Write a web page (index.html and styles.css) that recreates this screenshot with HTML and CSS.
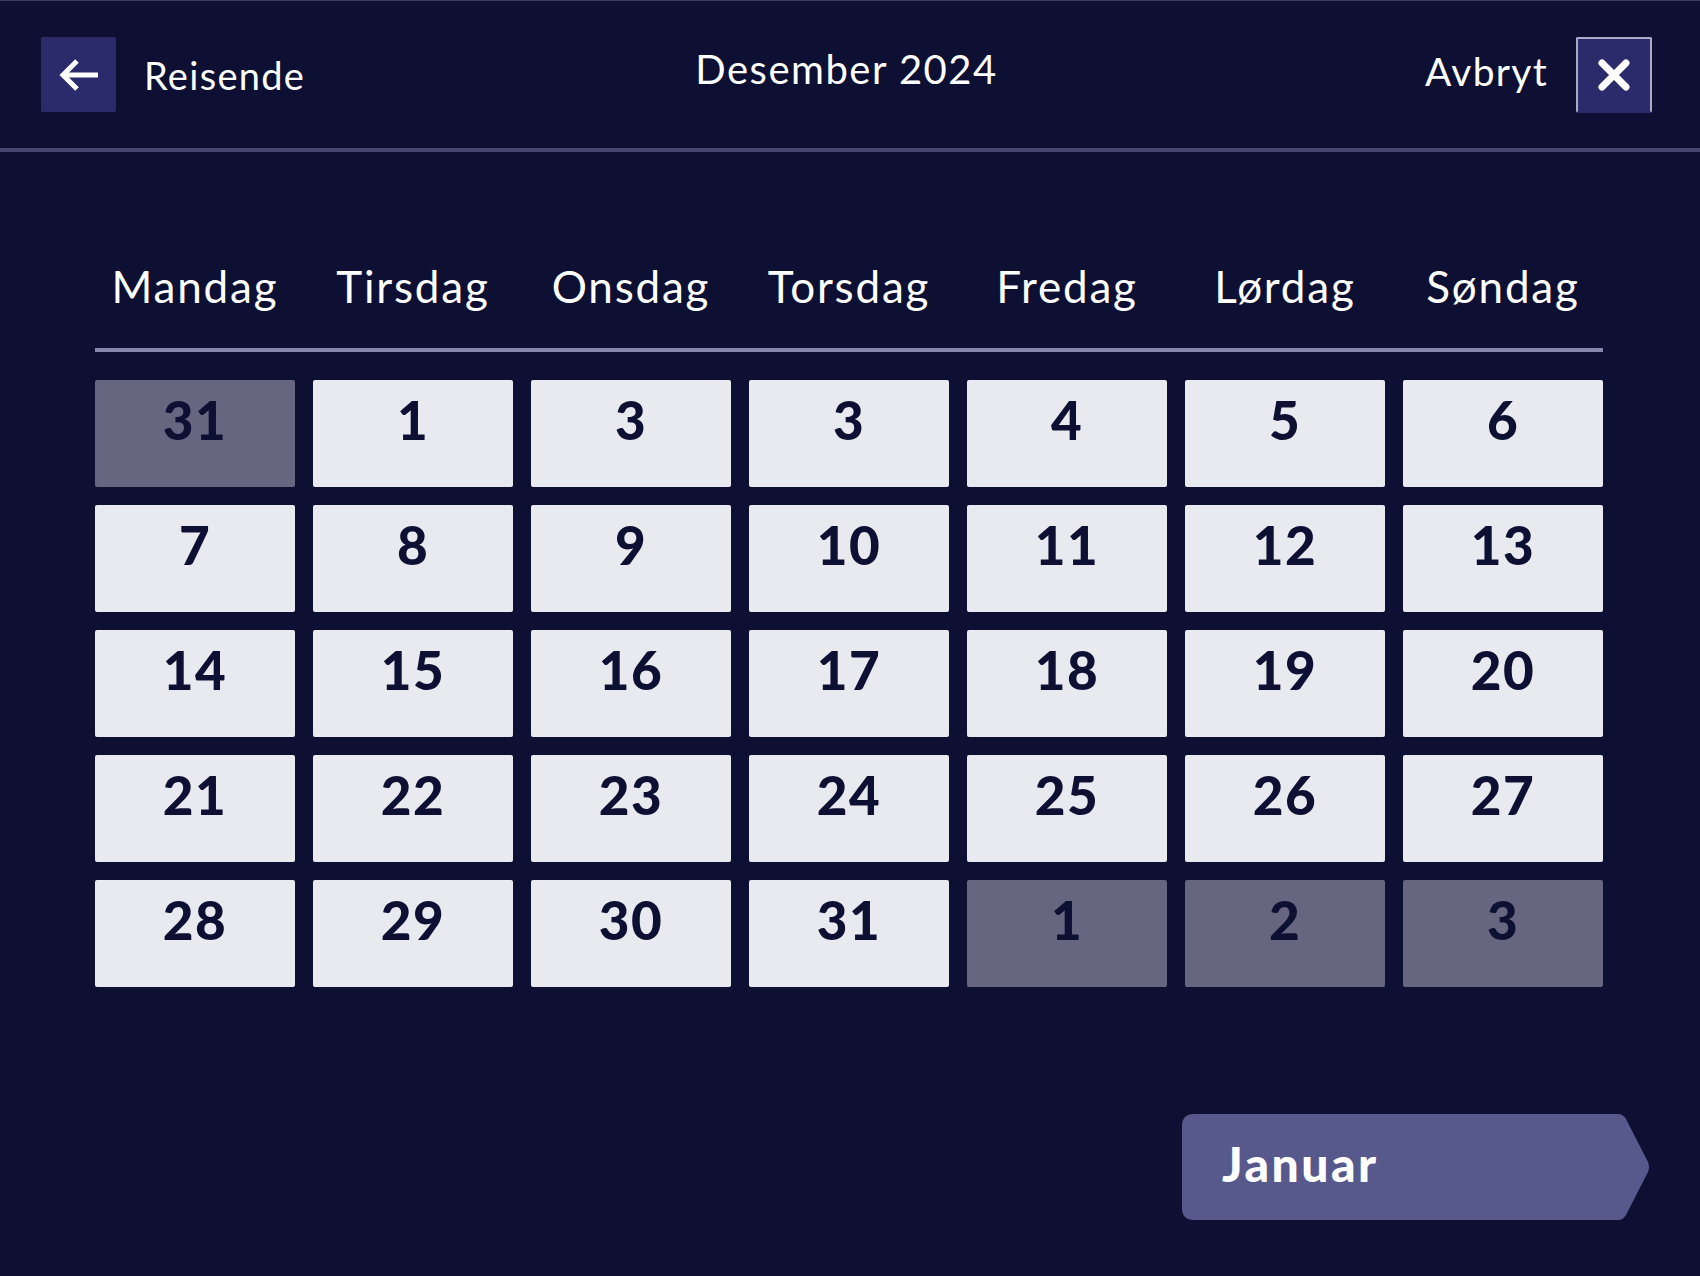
FILE: index.html
```html
<!DOCTYPE html>
<html lang="no">
<head>
<meta charset="utf-8">
<title>Desember 2024</title>
<link rel="stylesheet" href="styles.css">
</head>
<body>
<header class="topbar">
  <div class="topbar-left">
    <button class="icon-btn back-btn" aria-label="Tilbake">
      <svg width="40" height="32" viewBox="0 0 40 32"><path d="M39 16 H4 M18 2 L4 16 L18 30" fill="none" stroke="#fff" stroke-width="5" stroke-linejoin="miter"/></svg>
    </button>
    <span class="topbar-label">Reisende</span>
  </div>
  <h1 class="topbar-title">Desember 2024</h1>
  <div class="topbar-right">
    <span class="topbar-label cancel">Avbryt</span>
    <button class="icon-btn close-btn" aria-label="Avbryt">
      <svg width="34" height="34" viewBox="0 0 34 34"><path d="M5 5 L29 29 M29 5 L5 29" fill="none" stroke="#fff" stroke-width="7" stroke-linecap="round"/></svg>
    </button>
  </div>
</header>

<main class="calendar">
  <div class="weekdays">
    <div class="weekday">Mandag</div>
    <div class="weekday">Tirsdag</div>
    <div class="weekday">Onsdag</div>
    <div class="weekday">Torsdag</div>
    <div class="weekday">Fredag</div>
    <div class="weekday">Lørdag</div>
    <div class="weekday">Søndag</div>
  </div>
  <div class="divider"></div>
  <div class="days">
    <div class="day muted">31</div>
    <div class="day">1</div>
    <div class="day">3</div>
    <div class="day">3</div>
    <div class="day">4</div>
    <div class="day">5</div>
    <div class="day">6</div>
    <div class="day">7</div>
    <div class="day">8</div>
    <div class="day">9</div>
    <div class="day">10</div>
    <div class="day">11</div>
    <div class="day">12</div>
    <div class="day">13</div>
    <div class="day">14</div>
    <div class="day">15</div>
    <div class="day">16</div>
    <div class="day">17</div>
    <div class="day">18</div>
    <div class="day">19</div>
    <div class="day">20</div>
    <div class="day">21</div>
    <div class="day">22</div>
    <div class="day">23</div>
    <div class="day">24</div>
    <div class="day">25</div>
    <div class="day">26</div>
    <div class="day">27</div>
    <div class="day">28</div>
    <div class="day">29</div>
    <div class="day">30</div>
    <div class="day">31</div>
    <div class="day muted">1</div>
    <div class="day muted">2</div>
    <div class="day muted">3</div>
  </div>
  <div class="next-row">
    <button class="next-btn">Januar</button>
  </div>
</main>
</body>
</html>
```

FILE: styles.css
```css
html, body {
  margin: 0;
  padding: 0;
}

body {
  width: 1700px;
  height: 1276px;
  background: #0d1033;
  color: #fff;
  font-family: "Lato", "Noto Sans", sans-serif;
  border-top: 1px solid #3c3d5e;
  box-sizing: border-box;
  overflow: hidden;
}

.topbar {
  height: 147px;
  border-bottom: 4px solid #45466f;
  display: grid;
  grid-template-columns: 1fr auto 1fr;
  align-items: center;
  padding: 0 48px 0 41px;
}

.topbar-left {
  display: flex;
  align-items: center;
  gap: 28px;
}

.topbar-right {
  display: flex;
  align-items: center;
  justify-content: flex-end;
  gap: 28px;
}

.icon-btn {
  width: 75px;
  height: 75px;
  padding: 0;
  margin: 0;
  background: #2b2b6b;
  border: none;
  border-radius: 2px;
  display: flex;
  align-items: center;
  justify-content: center;
}

.close-btn {
  width: 76px;
  height: 76px;
  border: 2px solid #a9a9c8;
  border-bottom-color: #2b2b6b;
  box-sizing: border-box;
}

.topbar-label {
  font-size: 38px;
  color: #fff;
  letter-spacing: 1.3px;
}

.cancel {
  font-size: 39px;
  letter-spacing: 1.3px;
  margin-bottom: 8px;
}

.topbar-title {
  margin: 0 0 12px 0;
  font-size: 40px;
  font-weight: 400;
  letter-spacing: 1.5px;
}

.calendar {
  padding: 108px 97px 0 95px;
}

.weekdays {
  display: grid;
  grid-template-columns: repeat(7, 200px);
  column-gap: 18px;
}

.weekday {
  text-align: center;
  font-size: 44px;
  line-height: 53px;
  letter-spacing: 1.8px;
}

.divider {
  margin-top: 35px;
  height: 4px;
  width: 1508px;
  background: #8486ad;
}

.days {
  margin-top: 28px;
  display: grid;
  grid-template-columns: repeat(7, 200px);
  grid-auto-rows: 107px;
  gap: 18px;
}

.day {
  background: #e9eaf0;
  border-radius: 2px;
  color: #0e1033;
  font-weight: 900;
  font-size: 53px;
  line-height: 53px;
  padding-top: 13px;
  box-sizing: border-box;
  text-align: center;
  letter-spacing: 1.5px;
}

.day.muted {
  background: #666680;
}

.next-row {
  display: flex;
  justify-content: flex-end;
  margin-top: 127px;
  margin-right: -47px;
}

.next-btn {
  width: 468px;
  height: 106px;
  border: none;
  margin: 0;
  padding: 0 0 0 40px;
  text-align: left;
  background: #57588c;
  color: #fff;
  font-family: "Lato", "Noto Sans", sans-serif;
  font-weight: 900;
  font-size: 48px;
  line-height: 1;
  padding-bottom: 6px;
  letter-spacing: 2.5px;
  clip-path: path('M12,0 H436 Q441,0 444,5 L466,48 Q468,53 466,58 L444,101 Q441,106 436,106 H12 Q0,106 0,94 V12 Q0,0 12,0 Z');
}
```
